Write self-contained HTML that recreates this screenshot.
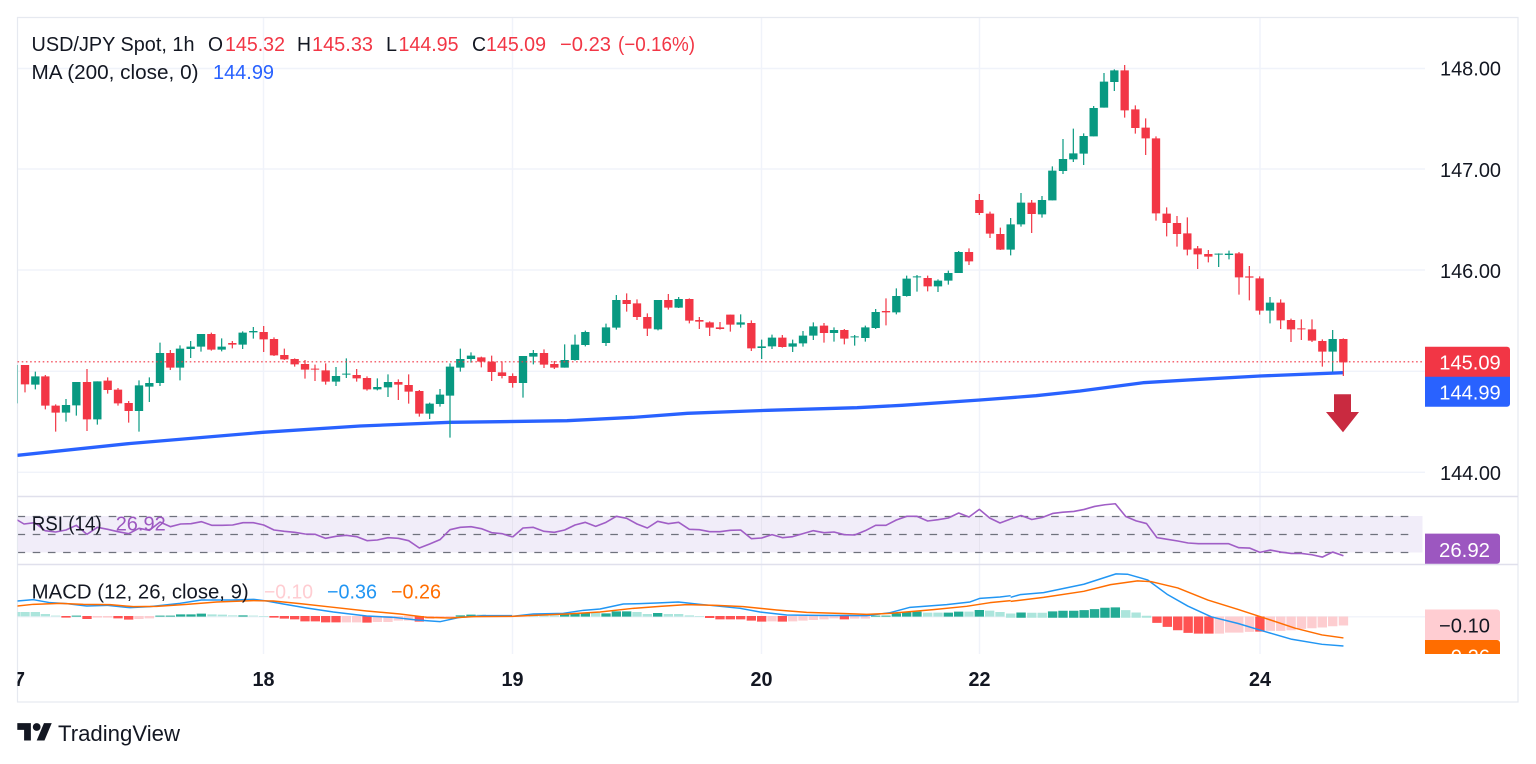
<!DOCTYPE html>
<html lang="en"><head><meta charset="utf-8"><title>USD/JPY Spot</title>
<style>
html,body{margin:0;padding:0;background:#fff;overflow:hidden}
svg{display:block;font-family:"Liberation Sans",sans-serif}
text{fill:#131722;font-size:20px}
.n{fill:none}
</style></head><body>
<svg width="1536" height="764" viewBox="0 0 1536 764" xmlns="http://www.w3.org/2000/svg">
<defs>
<clipPath id="c"><rect x="17.5" y="18" width="1407" height="636"/></clipPath>
<clipPath id="a"><rect x="17.5" y="654" width="1500" height="48"/></clipPath>
<clipPath id="b"><rect x="1420" y="600" width="100" height="54"/></clipPath>
</defs>
<rect width="1536" height="764" fill="#fff"/>
<!-- grid -->
<g stroke="#f0f3fa" stroke-width="1.4" fill="none">
<path d="M17.5 68.5H1425M17.5 169H1425M17.5 270H1425M17.5 371.3H1425M17.5 472.3H1425M17.5 616.8H1425"/>
<path d="M263.5 18V654M512.5 18V654M761.5 18V654M979.5 18V654M1260 18V654"/>
</g>
<rect x="17.5" y="516" width="1405" height="36.5" fill="#f1edf9"/>
<g stroke="#eef0f5" stroke-width="1" fill="none"><path d="M263.5 516V552M512.5 516V552M761.5 516V552M979.5 516V552M1260 516V552" stroke="#e6e3ef"/></g>
<g stroke="#6f727d" stroke-width="1.2" stroke-dasharray="7.6 7.6" fill="none"><path d="M17.5 516.5H1415M17.5 534.5H1415M17.5 552.5H1415"/></g>
<!-- frame -->
<g stroke="#e6e9f0" stroke-width="1.2" fill="none">
<path d="M17.5 17.5H1518V702H17.5Z"/>
<path d="M17.5 496.5H1518M17.5 564.5H1518" stroke="#e0e0ec" stroke-width="1.5"/>
</g>
<!-- MA -->
<g clip-path="url(#c)">
<path class="n" stroke="#2962ff" stroke-width="3.3" stroke-linejoin="round" d="M17.5 455.3L130 443.5L263 432.3L360 426L450 422.3L500 421.7L567 420.7L634 417.3L687.5 413.3L768 410.3L857 407.7L902 405.3L980 400L1036 395.7L1080 391L1143 382.7L1200 379.3L1260 376L1343 372.7"/>
<!-- candles -->
<g transform="translate(0,260) scale(.33333)" fill="none">
<g stroke="#089981">
<path stroke-width="3.6" d="M52 315V430M106 335V388M198 417V485M229 366V467M292 364V494M417 361V515M448 352V426M480 248V378M540 256V361M572 243V294M603 222V275M665 235V274M728 214V267M760 201V236M1008 321V378M1039 295V354M1132 355V391M1164 343V411M1289 428V477M1320 387V440M1350 310V533M1381 266V335M1413 277V308"/>
<path stroke-width="25" d="M106 349V374M198 435V458M229 366V436M292 364V478M417 376V453M448 369V380M480 279V369M540 266V323M572 260V267M603 222V260M665 260V269M728 218V254M760 213V217M1008 348V365M1039 341V344M1132 381V388M1164 366V382M1289 431V461M1320 404V432M1350 320V407M1381 297V323M1413 287V297"/>
</g>
<g stroke="#f23645">
<path stroke-width="3.6" d="M75 315V397M136 345V448M167 433V515M261 327V513M323 352V401M354 384V437M386 423V488M511 270V330M634 218V272M697 243V265M791 198V276M822 232V288M853 266V300M884 295V320M915 300V356M945 314V363M977 310V374M1070 327V365M1101 349V392M1195 358V420M1226 343V431M1258 390V470M1444 290V322M1475 287V363M1506 304V355M1538 340V383"/>
<path stroke-width="25" d="M75 315V373M136 349V437M167 437V458M261 366V478M323 362V390M354 389V430M386 429V453M511 279V323M634 222V269M697 249V254M791 216V238M822 237V286M853 285V298M884 297V313M915 312V329M945 326V329M977 331V365M1070 345V355M1101 354V388M1195 366V374M1226 375V395M1258 393V461M1444 292V305M1475 305V336M1506 337V348M1538 348V369"/>
</g>
</g>
<g transform="translate(500,260) scale(.33333)" fill="none">
<g stroke="#089981">
<path stroke-width="3.6" d="M69 288V413M100 270V313M194 253V323M225 224V302M256 212V259M318 191V258M349 105V209M474 120V211M536 111V144M722 163V203M785 239V297M816 224V267M878 239V276M909 213V260M940 187V240M1002 202V245M1064 225V257M1096 197V245M1127 147V207M1189 85V163M1220 47V110M1251 45V95M1314 58V96M1345 32V74M1376 -27V39"/>
<path stroke-width="25" d="M69 288V369M100 279V290M194 300V323M225 254V300M256 216V255M318 202V249M349 120V203M474 120V208M536 117V143M722 187V194M785 259V264M816 233V259M878 250V260M909 227V250M940 199V227M1002 210V219M1064 229V232M1096 202V234M1127 156V204M1189 108V157M1220 56V108M1251 49V52M1314 62V79M1345 39V62M1376 -24V39"/>
</g>
<g stroke="#f23645">
<path stroke-width="3.6" d="M132 268V324M163 303V327M380 100V155M411 118V180M442 160V228M505 102V149M568 115V190M598 171V207M629 184V228M660 186V209M691 164V215M754 181V273M847 225V263M972 189V248M1033 207V253M1158 115V196M1283 47V94"/>
<path stroke-width="25" d="M132 279V314M163 312V323M380 120V132M411 130V171M442 171V206M505 120V143M568 117V182M598 180V185M629 187V203M660 202V207M691 164V194M754 189V265M847 233V261M972 197V219M1033 210V236M1158 153V157M1283 54V79"/>
</g>
</g>
<g transform="translate(960,50) scale(.33333)" fill="none">
<g stroke="#089981">
<path stroke-width="3.6" d="M152 504V616M183 429V530M246 438V503M277 349V451M309 267V372M340 236V336M371 250V345M401 168V259M432 69V173M463 58V123"/>
<path stroke-width="25" d="M152 523V599M183 458V523M246 450V493M277 362V451M309 327V363M340 310V328M371 258V311M401 174V259M432 95V173M463 61V96"/>
</g>
<g stroke="#f23645">
<path stroke-width="3.6" d="M27 595V645M58 432V495M90 485V564M121 533V600M215 450V549M494 45V203M526 166V251M557 205V315M588 259V512M620 472V559M651 498V590M682 502V616"/>
<path stroke-width="25" d="M27 606V634M58 450V489M90 491V551M121 552V599M215 458V492M494 61V181M526 178V234M557 233V265M588 265V490M620 491V519M651 519V552M682 550V599"/>
</g>
</g>
<g transform="translate(1180,230) scale(.33333)" fill="none">
<g stroke="#089981">
<path stroke-width="3.6" d="M116 70V111M147 62V88M270 201V280M458 300V425"/>
<path stroke-width="25" d="M116 71V74M147 71V75M270 218V242M458 327V365"/>
</g>
<g stroke="#f23645">
<path stroke-width="3.6" d="M53 48V117M85 60V97M177 66V194M208 108V211M239 139V254M302 208V297M333 266V336M364 268V330M396 268V336M427 328V410M490 325V438"/>
<path stroke-width="25" d="M53 55V73M85 72V80M177 70V142M208 139V143M239 145V242M302 218V271M333 270V298M364 295V298M396 298V332M427 333V365M490 327V397"/>
</g>
</g>
<!-- RSI -->
<g class="n" fill="none" stroke="#a05ec6" stroke-width="4.8" stroke-linejoin="round">
<path transform="translate(0,490) scale(.33333)" d="M52 90L72 102L104 98L135 122L167 126L198 120L229 106L261 133L292 112L323 118L354 125L386 131L417 115L448 121L480 96L511 110L542 102L573 101L604 95L636 106L667 106L698 105L729 98L760 98L791 105L822 120L853 124L884 127L915 132L946 133L977 145L1008 139L1039 136L1070 140L1101 152L1132 150L1164 143L1195 145L1226 152L1258 174L1289 162L1320 149L1350 119L1381 112L1413 110L1444 116L1475 128L1506 131L1538 141"/>
<path transform="translate(500,490) scale(.33333)" d="M38 141L69 114L100 112L132 124L163 127L194 120L225 105L256 97L287 109L318 97L349 79L380 85L411 102L442 114L473 94L505 101L536 97L568 118L598 119L629 125L660 125L691 121L722 120L754 146L785 144L816 134L847 143L878 140L909 131L940 122L972 128L1002 126L1033 134L1064 135L1096 122L1127 106L1158 106L1189 90L1220 79L1251 79L1283 93L1314 89L1345 84L1376 69L1407 81L1438 58L1469 84L1500 99L1532 87"/>
<path transform="translate(1010,490) scale(.33546)" d="M2 86L33 76L65 88L96 82L127 70L158 66L190 64L221 58L252 49L283 44L314 41L345 79L376 92L407 100L438 142L469 147L500 152L531 158L562 160L593 160L624 160L651 160L682 172L714 173L745 186L776 179L807 185L838 189L869 189L900 193L931 200L962 185L994 196"/>
</g>
<!-- MACD histogram -->
<g transform="translate(0,490) scale(.33333)" fill="none" stroke-width="28">
<path stroke="#ace5dc" d="M46 366V379M75 366V379M106 366V379M136 372V379M167 377V379M636 373V379M667 374V379M698 376V379M760 377V379M791 378V380M1444 374V379M1475 375V379M1506 376V379"/>
<path stroke="#22ab94" d="M229 377V380M480 377V380M511 377V380M542 373V380M573 373V380M604 371V380M729 376V380M1381 376V380M1413 374V380"/>
<path stroke="#ff5252" d="M198 378V383M261 378V387M354 378V385M386 378V389M822 378V383M853 378V386M884 378V388M915 378V394M946 378V394M977 378V397M1008 378V397M1101 378V398M1258 378V395"/>
<path stroke="#fdcdd0" d="M292 378V383M323 378V383M417 378V387M448 378V385M1039 378V397M1070 378V397M1132 378V396M1164 378V396M1195 378V392M1226 378V392M1289 378V387M1320 378V384M1350 378V382"/>
</g>
<g transform="translate(500,490) scale(.33333)" fill="none" stroke-width="28">
<path stroke="#ace5dc" d="M100 377V380M132 376V380M163 376V380M287 368V380M411 366V380M442 372V380M505 372V380M536 372V380M568 376V380M598 378V380M1283 368V380M1314 368V380M1407 365V380M1469 362V380M1500 366V380"/>
<path stroke="#22ab94" d="M194 370V380M225 370V380M256 368V380M318 370V380M349 364V380M380 364V380M473 369V380M1127 377V380M1158 377V380M1189 370V380M1220 366V380M1251 365V380M1345 368V380M1376 365V380M1438 360V380"/>
<path stroke="#ff5252" d="M629 378V384M660 378V388M691 378V388M722 378V388M754 378V392M785 378V395M847 378V395M1033 378V388"/>
<path stroke="#fdcdd0" d="M816 378V394M878 378V394M909 378V392M940 378V390M972 378V388M1002 378V385M1064 378V386M1096 378V386"/>
</g>
<g transform="translate(1010,490) scale(.33546)" fill="none" stroke-width="28">
<path stroke="#ace5dc" d="M2 368V381M65 366V381M96 366V381M345 358V381M376 365V381M407 375V381"/>
<path stroke="#22ab94" d="M33 365V381M127 362V381M158 360V381M190 360V381M221 358V381M252 355V381M283 351V381M314 350V381"/>
<path stroke="#ff5252" d="M438 377V396M469 377V408M500 377V418M531 377V426M562 377V428M593 377V428M745 377V422"/>
<path stroke="#fdcdd0" d="M624 377V428M655 377V425M682 377V425M714 377V423M776 377V420M807 377V420M838 377V418M869 377V414M900 377V412M931 377V410M962 377V406M994 377V404"/>
</g>
<!-- MACD lines -->
<g fill="none" stroke-width="4.4" stroke-linejoin="round">
<g transform="translate(0,490) scale(.33333)">
<path stroke="#2196f3" d="M52 333L100 329L150 338L200 341L260 348L320 346L390 353L450 350L540 340L604 330L700 330L760 328L800 333L850 342L920 354L1000 366L1100 378L1180 382L1250 390L1320 395L1380 382L1450 377L1536 377"/>
<path stroke="#ff6d00" d="M52 348L100 343L180 340L250 343L330 344L400 350L470 349L560 343L650 336L760 332L820 333L900 341L1000 352L1100 363L1200 372L1280 382L1350 384L1420 380L1536 379"/>
</g>
<g transform="translate(500,490) scale(.33333)">
<path stroke="#2196f3" d="M36 379L100 372L190 370L250 361L300 357L370 342L420 341L470 339L535 336L600 343L720 355L780 366L860 375L950 376L1100 377L1170 368L1230 352L1340 344L1410 336L1440 325L1500 321L1532 317"/>
<path stroke="#ff6d00" d="M36 379L100 376L200 372L300 366L400 355L480 349L560 344L650 346L730 350L830 360L920 367L1040 371L1100 373L1170 370L1300 359L1400 349L1470 338L1532 332"/>
</g>
<g transform="translate(1010,490) scale(.33546)">
<path stroke="#2196f3" d="M2 320L30 312L100 306L220 281L316 250L350 251L410 268L470 312L530 346L600 378L680 398L760 422L840 445L930 460L994 465"/>
<path stroke="#ff6d00" d="M2 332L100 320L220 302L300 282L380 271L420 273L500 292L590 328L680 356L760 382L850 412L930 432L994 441"/>
</g>
</g>
<!-- price dotted line -->
<path d="M17.5 361.8H1424" stroke="#f23645" stroke-width="1.2" stroke-dasharray="1.6 2.6" fill="none"/>
</g>
<!-- arrow -->
<path d="M1334 394.3H1351V412H1359L1343 432.3L1326 412H1334Z" fill="#c92a40"/>
<!-- legend -->
<text x="31.5" y="51" textLength="163" lengthAdjust="spacingAndGlyphs">USD/JPY Spot, 1h</text>
<text x="208" y="51" textLength="15" lengthAdjust="spacingAndGlyphs">O</text>
<text x="225" y="51" textLength="60" lengthAdjust="spacingAndGlyphs" style="fill:#f23645">145.32</text>
<text x="297" y="51" textLength="14" lengthAdjust="spacingAndGlyphs">H</text>
<text x="312" y="51" textLength="61" lengthAdjust="spacingAndGlyphs" style="fill:#f23645">145.33</text>
<text x="386" y="51" textLength="11" lengthAdjust="spacingAndGlyphs">L</text>
<text x="398.5" y="51" textLength="60" lengthAdjust="spacingAndGlyphs" style="fill:#f23645">144.95</text>
<text x="472" y="51" textLength="14" lengthAdjust="spacingAndGlyphs">C</text>
<text x="486" y="51" textLength="60" lengthAdjust="spacingAndGlyphs" style="fill:#f23645">145.09</text>
<text x="560" y="51" textLength="51" lengthAdjust="spacingAndGlyphs" style="fill:#f23645">−0.23</text>
<text x="618" y="51" textLength="77" lengthAdjust="spacingAndGlyphs" style="fill:#f23645">(−0.16%)</text>
<text x="31.5" y="79" textLength="167" lengthAdjust="spacingAndGlyphs">MA (200, close, 0)</text>
<text x="213" y="79" textLength="61" lengthAdjust="spacingAndGlyphs" style="fill:#2962ff">144.99</text>
<text x="31.7" y="530.7" textLength="70" lengthAdjust="spacingAndGlyphs">RSI (14)</text>
<text x="115.7" y="530.7" textLength="50" lengthAdjust="spacingAndGlyphs" style="fill:#9c57c0">26.92</text>
<text x="31.7" y="598.3" textLength="217" lengthAdjust="spacingAndGlyphs">MACD (12, 26, close, 9)</text>
<text x="264" y="598.3" textLength="49" lengthAdjust="spacingAndGlyphs" style="fill:#ffcdd2">−0.10</text>
<text x="327" y="598.3" textLength="50" lengthAdjust="spacingAndGlyphs" style="fill:#2196f3">−0.36</text>
<text x="391" y="598.3" textLength="50" lengthAdjust="spacingAndGlyphs" style="fill:#ff6d00">−0.26</text>
<!-- price axis -->
<g>
<text x="1440" y="75.5" textLength="61" lengthAdjust="spacingAndGlyphs">148.00</text>
<text x="1440" y="177" textLength="61" lengthAdjust="spacingAndGlyphs">147.00</text>
<text x="1440" y="278" textLength="61" lengthAdjust="spacingAndGlyphs">146.00</text>
<text x="1440" y="480" textLength="61" lengthAdjust="spacingAndGlyphs">144.00</text>
</g>
<path d="M1425 346.7H1507a3 3 0 0 1 3 3V377H1425Z" fill="#f23645"/>
<path d="M1425 376.7H1510V403.7a3 3 0 0 1-3 3H1425Z" fill="#2962ff"/>
<text x="1439.3" y="369.3" textLength="61.4" lengthAdjust="spacingAndGlyphs" style="fill:#fff">145.09</text>
<text x="1439.3" y="399.3" textLength="61.4" lengthAdjust="spacingAndGlyphs" style="fill:#fff">144.99</text>
<path d="M1425 533.6H1497a3 3 0 0 1 3 3V560.8a3 3 0 0 1-3 3H1425Z" fill="#9c57c0"/>
<text x="1439" y="557" textLength="51" lengthAdjust="spacingAndGlyphs" style="fill:#fff">26.92</text>
<path d="M1425 609.5H1497a3 3 0 0 1 3 3V640H1425Z" fill="#ffcdd2"/>
<text x="1439" y="632.6" textLength="51" lengthAdjust="spacingAndGlyphs">−0.10</text>
<g clip-path="url(#b)">
<path d="M1425 640H1497a3 3 0 0 1 3 3V670H1425Z" fill="#ff6d00"/>
<text x="1439" y="663.7" textLength="51" lengthAdjust="spacingAndGlyphs" style="fill:#fff">−0.26</text>
</g>
<!-- time axis -->
<g clip-path="url(#a)" style="font-weight:bold">
<text x="3" y="686" textLength="22" lengthAdjust="spacingAndGlyphs">17</text>
<text x="252.5" y="686" textLength="22" lengthAdjust="spacingAndGlyphs">18</text>
<text x="501.5" y="686" textLength="22" lengthAdjust="spacingAndGlyphs">19</text>
<text x="750.5" y="686" textLength="22" lengthAdjust="spacingAndGlyphs">20</text>
<text x="968.5" y="686" textLength="22" lengthAdjust="spacingAndGlyphs">22</text>
<text x="1249" y="686" textLength="22" lengthAdjust="spacingAndGlyphs">24</text>
</g>
<!-- logo -->
<g transform="translate(17.3,719.2) scale(.97)" fill="#131722">
<path d="M14 22H7V11H0V4h14v18zM28 22h-8l7.5-18h8L28 22z"/><circle cx="20" cy="8" r="4"/>
</g>
<text x="58" y="741" textLength="122" lengthAdjust="spacingAndGlyphs" style="font-size:22px">TradingView</text>
</svg>
</body></html>
